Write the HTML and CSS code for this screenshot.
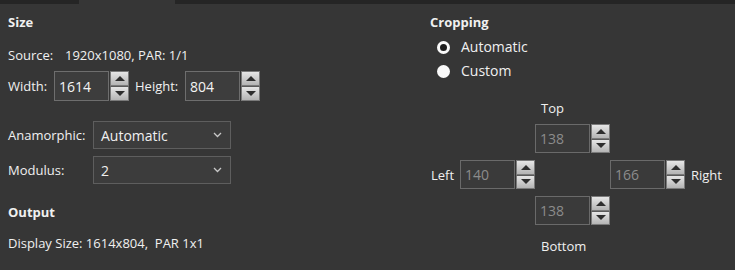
FILE: index.html
```html
<!DOCTYPE html>
<html>
<head>
<meta charset="utf-8">
<link rel="stylesheet" href="styles.css">
</head>
<body>
<div class="tabstrip"><div class="tab-dark a"></div><div class="tab-light"></div><div class="tab-dark b"></div></div>
<div class="main">
  <div class="col-left">
    <div class="heading">Size</div>
    <div class="line source"><span class="src-label">Source:</span><span>1920x1080, PAR: 1/1</span></div>
    <div class="row-wh">
      <span class="lbl-width">Width:</span>
      <div class="spinbox"><div class="spin-input">1614</div><div class="spin-btns"><div class="sb up"><span class="tri-up"></span></div><div class="sb down"><span class="tri-down"></span></div></div></div>
      <span class="lbl-height">Height:</span>
      <div class="spinbox"><div class="spin-input">804</div><div class="spin-btns"><div class="sb up"><span class="tri-up"></span></div><div class="sb down"><span class="tri-down"></span></div></div></div>
    </div>
    <div class="row-combo first">
      <span class="combo-label">Anamorphic:</span>
      <div class="combo"><span>Automatic</span><svg class="chev" width="9" height="6" viewBox="0 0 9 6"><path d="M1 1 L4.5 4.5 L8 1" fill="none" stroke="#c8c8c8" stroke-width="1.3"/></svg></div>
    </div>
    <div class="row-combo second">
      <span class="combo-label">Modulus:</span>
      <div class="combo"><span>2</span><svg class="chev" width="9" height="6" viewBox="0 0 9 6"><path d="M1 1 L4.5 4.5 L8 1" fill="none" stroke="#c8c8c8" stroke-width="1.3"/></svg></div>
    </div>
    <div class="heading output">Output</div>
    <div class="line display">Display Size: 1614x804,&nbsp; PAR 1x1</div>
  </div>
  <div class="col-right">
    <div class="heading">Cropping</div>
    <div class="radio r1"><span class="dot checked"></span><span>Automatic</span></div>
    <div class="radio r2"><span class="dot"></span><span>Custom</span></div>
    <div class="crop-top-label">Top</div>
    <div class="crop-grid">
      <div class="g-top spinbox dis"><div class="spin-input">138</div><div class="spin-btns"><div class="sb up"><span class="tri-up"></span></div><div class="sb down"><span class="tri-down"></span></div></div></div>
      <div class="g-left-label">Left</div>
      <div class="g-left spinbox dis"><div class="spin-input">140</div><div class="spin-btns"><div class="sb up"><span class="tri-up"></span></div><div class="sb down"><span class="tri-down"></span></div></div></div>
      <div class="g-right spinbox dis"><div class="spin-input">166</div><div class="spin-btns"><div class="sb up"><span class="tri-up"></span></div><div class="sb down"><span class="tri-down"></span></div></div></div>
      <div class="g-right-label">Right</div>
      <div class="g-bottom spinbox dis"><div class="spin-input">138</div><div class="spin-btns"><div class="sb up"><span class="tri-up"></span></div><div class="sb down"><span class="tri-down"></span></div></div></div>
    </div>
    <div class="crop-bottom-label">Bottom</div>
  </div>
</div>
</body>
</html>
```
FILE: styles.css
```css
html, body {
  margin: 0;
  padding: 0;
  background: #363636;
  width: 735px;
  height: 270px;
  overflow: hidden;
}
body {
  font-family: "Open Sans", "Noto Sans", sans-serif;
  font-size: 13px;
  color: #f0f0f0;
}
.tabstrip {
  display: flex;
  height: 4px;
}
.tab-dark { background: #252525; }
.tab-dark.a { width: 79px; }
.tab-dark.b { flex: 1; }
.tab-light { width: 96px; background: #363636; }

.main {
  display: flex;
}
.col-left {
  width: 422px;
  padding-left: 8px;
  padding-top: 10px;
}
.col-right {
  padding-top: 10px;
}
.heading {
  font-weight: bold;
  line-height: 16px;
  height: 16px;
}
.line {
  line-height: 16px;
  height: 16px;
}
.source { margin-top: 17px; display: flex; }
.src-label { width: 57px; }

.row-wh {
  margin-top: 8px;
  display: flex;
  align-items: center;
  height: 30px;
}
.lbl-width { width: 46px; }
.lbl-height { width: 50px; margin-left: 6px; }

.spinbox {
  display: flex;
  height: 30px;
  width: 75px;
}
.spin-input {
  box-sizing: border-box;
  width: 56px;
  height: 100%;
  border: 1px solid #6e6e6e;
  background: #3d3d3d;
  padding-left: 4px;
  display: flex;
  align-items: center;
  font-size: 14px;
  color: #f4f4f4;
}
.spin-btns {
  width: 19px;
  margin-left: 1px;
  display: flex;
  flex-direction: column;
}
.sb {
  flex: 1;
  box-sizing: border-box;
  border: 1px solid #7a7a7a;
  background: linear-gradient(#e6e6e6, #b4b4b4);
  display: flex;
  align-items: center;
  justify-content: center;
}
.sb.down { border-top: 1px solid #5a5a5a; }
.tri-up {
  width: 0; height: 0;
  border-left: 5px solid transparent;
  border-right: 5px solid transparent;
  border-bottom: 5px solid #2e2e2e;
}
.tri-down {
  width: 0; height: 0;
  border-left: 5px solid transparent;
  border-right: 5px solid transparent;
  border-top: 5px solid #2e2e2e;
}

.row-combo {
  display: flex;
  align-items: center;
  height: 28px;
}
.row-combo.first { margin-top: 20px; }
.row-combo.second { margin-top: 7px; }
.combo-label { width: 85px; }
.combo {
  box-sizing: border-box;
  width: 138px;
  height: 28px;
  border: 1px solid #5e5e5e;
  background: #3c3c3c;
  display: flex;
  align-items: center;
  justify-content: space-between;
  padding: 0 8px 0 7px;
  font-size: 14px;
}
.chev { display: block; }

.heading.output { margin-top: 20px; }
.display { margin-top: 15px; }

.radio {
  display: flex;
  align-items: center;
  height: 16px;
  line-height: 16px;
  padding-left: 7px;
  font-size: 14px;
}
.r1 { margin-top: 9px; }
.r2 { margin-top: 8px; }
.dot {
  box-sizing: border-box;
  width: 13px;
  height: 13px;
  border-radius: 50%;
  background: #fafafa;
  margin-right: 11px;
}
.dot.checked {
  border: 3.5px solid #fafafa;
  background: #1e1e1e;
}

.crop-top-label {
  margin-top: 21px;
  height: 16px;
  line-height: 16px;
  padding-left: 111px;
}
.crop-grid {
  margin-top: 8px;
  display: grid;
  grid-template-columns: 30px 75px 75px 75px auto;
  grid-template-rows: 29px 29px 29px;
  row-gap: 7px;
}
.crop-grid .spinbox { height: 29px; }
.g-top { grid-column: 3; grid-row: 1; }
.g-left-label { grid-column: 1; grid-row: 2; display: flex; align-items: center; padding-left: 1px; }
.g-left { grid-column: 2; grid-row: 2; }
.g-right { grid-column: 4; grid-row: 2; }
.g-right-label { grid-column: 5; grid-row: 2; display: flex; align-items: center; padding-left: 6px; }
.g-bottom { grid-column: 3; grid-row: 3; }
.dis .spin-input {
  color: #8c8c8c;
  background: #3a3a3a;
  border-color: #6a6a6a;
}
.crop-bottom-label {
  margin-top: 13px;
  height: 16px;
  line-height: 16px;
  padding-left: 111px;
}
```
